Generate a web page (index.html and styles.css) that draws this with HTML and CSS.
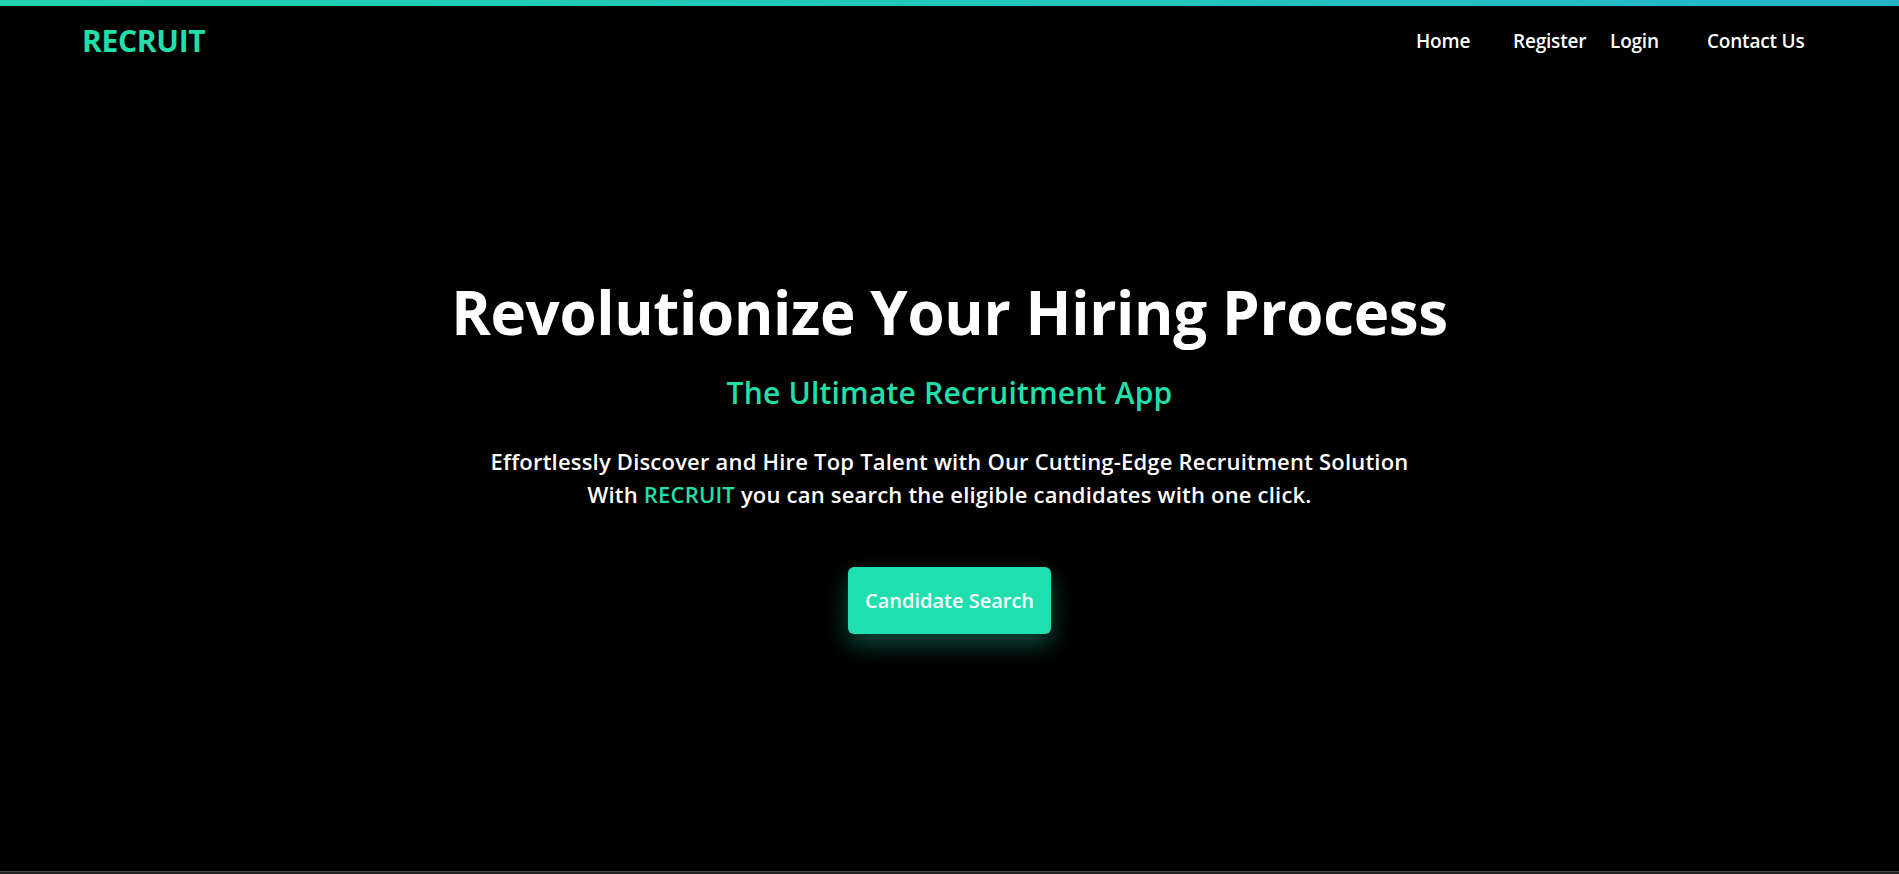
FILE: index.html
```html
<!DOCTYPE html>
<html lang="en">
<head>
<meta charset="utf-8">
<title>RECRUIT</title>
<link rel="stylesheet" href="styles.css">
</head>
<body>
<div class="page">
  <div class="topbar"></div>
  <header class="header">
    <a class="logo" href="#">RECRUIT</a>
    <nav class="nav">
      <a href="#" class="nav-link">Home</a>
      <a href="#" class="nav-link">Register</a>
      <a href="#" class="nav-link">Login</a>
      <a href="#" class="nav-link">Contact Us</a>
    </nav>
  </header>
  <main class="hero">
    <h1 class="hero-title">Revolutionize Your Hiring Process</h1>
    <h2 class="hero-subtitle">The Ultimate Recruitment App</h2>
    <p class="hero-text">Effortlessly Discover and Hire Top Talent with Our Cutting-Edge Recruitment Solution<br>With <span class="accent">RECRUIT</span> you can search the eligible candidates with one click.</p>
    <a href="#" class="btn">Candidate Search</a>
  </main>
  <div class="bottom-strip"></div>
</div>
</body>
</html>
```
FILE: styles.css
```css
* { box-sizing: border-box; }
html, body {
  margin: 0;
  padding: 0;
  background: #000;
}
body {
  font-family: "Open Sans", "Noto Sans", sans-serif;
  color: #fff;
  height: 874px;
  overflow: hidden;
}
.page {
  display: flex;
  flex-direction: column;
  height: 874px;
}
.topbar {
  height: 6px;
  background: linear-gradient(90deg, #22d2ae 0%, #23c4bd 60%, #25b3cb 100%);
}
.header {
  display: flex;
  justify-content: space-between;
  align-items: flex-start;
  padding: 17px 95px 0 82px;
}
.logo {
  font-size: 30px;
  line-height: 36px;
  font-weight: 700;
  letter-spacing: -0.3px;
  color: #20dfaa;
  text-decoration: none;
}
.nav {
  display: grid;
  grid-template-columns: repeat(4, 97px);
}
.nav-link {
  font-size: 19px;
  line-height: 36px;
  font-weight: 600;
  letter-spacing: -0.2px;
  color: #fff;
  text-decoration: none;
  white-space: nowrap;
}
.hero {
  flex: 1;
  display: flex;
  flex-direction: column;
  align-items: center;
  text-align: center;
  padding-top: 217px;
}
.hero-title {
  margin: 0;
  font-size: 60px;
  line-height: 72px;
  font-weight: 700;
  letter-spacing: -0.32px;
  color: #fff;
}
.hero-subtitle {
  margin: 27px 0 0;
  font-size: 30px;
  line-height: 36px;
  font-weight: 600;
  letter-spacing: 0.2px;
  color: #20dfaa;
}
.hero-text {
  margin: 34px 0 0;
  font-size: 22px;
  line-height: 33px;
  font-weight: 600;
  letter-spacing: 0.2px;
  color: #fff;
}
.accent { color: #20dfaa; }
.btn {
  margin-top: 56px;
  display: inline-block;
  padding: 20px 17px;
  font-size: 20px;
  line-height: 27px;
  font-weight: 600;
  color: #fff;
  text-decoration: none;
  background: #20dfae;
  border-radius: 6px;
  box-shadow: 0 10px 24px rgba(32, 223, 174, 0.35);
}
.bottom-strip {
  height: 3px;
  background: #222;
  border-top: 1px solid #4a4a4a;
}
```
